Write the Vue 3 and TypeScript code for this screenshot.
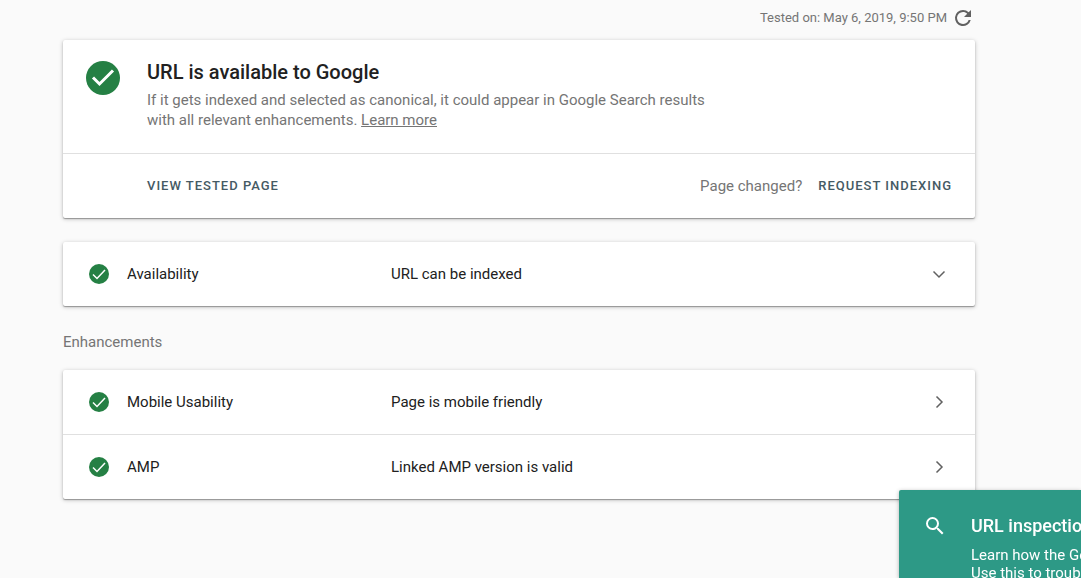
<script setup lang="ts">
import { ref } from 'vue'

interface Check {
  name: string
  status: string
}

const availability: Check = { name: 'Availability', status: 'URL can be indexed' }
const enhancements: Check[] = [
  { name: 'Mobile Usability', status: 'Page is mobile friendly' },
  { name: 'AMP', status: 'Linked AMP version is valid' },
]
const testedOn = ref('May 6, 2019, 9:50 PM')
</script>

<template>
  <div class="page">
    <main class="content">
      <div class="tested">
        <span>Tested on: {{ testedOn }}</span>
        <button class="refresh" type="button" aria-label="Test again">
          <svg viewBox="0 0 24 24" width="24" height="24" aria-hidden="true">
            <path d="M17.65 6.35A7.95 7.95 0 0 0 12 4a8 8 0 1 0 7.73 10h-2.08A6 6 0 1 1 12 6c1.66 0 3.14.69 4.22 1.78L13 11h7V4z" />
          </svg>
        </button>
      </div>

      <section class="card">
        <div class="verdict">
          <svg class="verdict-icon" viewBox="0 0 34 34" width="34" height="34" aria-hidden="true">
            <circle cx="17" cy="17" r="17" />
            <path d="M7 16.500l6.500 6.500L27 9.500" stroke-width="3" />
          </svg>
          <div class="verdict-text">
            <h1>URL is available to Google</h1>
            <p>
              If it gets indexed and selected as canonical, it could appear in Google Search results with all relevant
              enhancements. <a href="#">Learn more</a>
            </p>
          </div>
        </div>
        <div class="actions">
          <button class="action" type="button">VIEW TESTED PAGE</button>
          <span class="changed">Page changed?</span>
          <button class="action" type="button">REQUEST INDEXING</button>
        </div>
      </section>

      <section class="card">
        <button class="row" type="button">
          <svg class="status-icon" viewBox="0 0 20 20" width="20" height="20" aria-hidden="true">
            <circle cx="10" cy="10" r="10" />
            <path d="M4 10.500l4 4L16 6" stroke-width="1.500" />
          </svg>
          <span class="name">{{ availability.name }}</span>
          <span class="status">{{ availability.status }}</span>
          <svg class="chevron" viewBox="0 0 24 24" width="24" height="24" aria-hidden="true">
            <path d="M6.500 9.500l5.500 5.500L17.500 9.500" />
          </svg>
        </button>
      </section>

      <h2>Enhancements</h2>

      <section class="card">
        <button v-for="check in enhancements" :key="check.name" class="row" type="button">
          <svg class="status-icon" viewBox="0 0 20 20" width="20" height="20" aria-hidden="true">
            <circle cx="10" cy="10" r="10" />
            <path d="M4 10.500l4 4L16 6" stroke-width="1.500" />
          </svg>
          <span class="name">{{ check.name }}</span>
          <span class="status">{{ check.status }}</span>
          <svg class="chevron" viewBox="0 0 24 24" width="24" height="24" aria-hidden="true">
            <path d="M9.500 6.500l5.500 5.500L9.500 17.500" />
          </svg>
        </button>
      </section>
    </main>

    <aside class="tip">
      <svg class="search" viewBox="0 0 24 24" width="24" height="24" aria-hidden="true">
        <path d="M15.500 14h-.79l-.28-.27A6.470 6.470 0 0 0 16 9.500 6.500 6.500 0 1 0 9.500 16c1.610 0 3.090-.59 4.230-1.570l.27.28v.79l5 4.990L20.490 19zm-6 0a4.500 4.500 0 1 1 0-9 4.500 4.500 0 0 1 0 9z" />
      </svg>
      <div>
        <h3>URL inspection</h3>
        <p>Learn how the Google<br />Use this to troubleshoot</p>
      </div>
    </aside>
  </div>
</template>

<style>
body {
  margin: 0;
  background: #fafafa;
}
</style>

<style scoped>
.page {
  min-height: 100vh;
  box-sizing: border-box;
  padding: 0 106px 24px 63px;
  font-family: Roboto, "Liberation Sans", sans-serif;
  font-size: 15px;
  line-height: 20px;
  color: #212121;
}
button {
  margin: 0;
  padding: 0;
  border: 0;
  background: none;
  font: inherit;
  color: inherit;
  cursor: pointer;
}
h1,
h2,
h3,
p {
  margin: 0;
}
.tested {
  display: flex;
  align-items: center;
  justify-content: flex-end;
  gap: 4px;
  height: 36px;
  margin-bottom: 4px;
  font-size: 13px;
  color: #757575;
}
.refresh {
  display: flex;
}
.refresh svg {
  fill: #616161;
}
.card {
  margin-bottom: 24px;
  border-radius: 2px;
  background: #fff;
  box-shadow: 0 1px 1px rgba(0, 0, 0, 0.3), 0 1px 4px rgba(0, 0, 0, 0.25);
}
.verdict {
  display: flex;
  gap: 27px;
  padding: 20px 23px 23px;
}
.verdict-icon {
  flex: none;
  margin-top: 1px;
}
.verdict-icon circle,
.status-icon circle {
  fill: #258044;
}
.verdict-icon path,
.status-icon path {
  fill: none;
  stroke: #fff;
}
.verdict-text {
  max-width: 570px;
}
h1 {
  margin-bottom: 6px;
  font-size: 20px;
  font-weight: 500;
  line-height: 24px;
}
.verdict-text p {
  color: #757575;
}
.verdict-text a {
  color: inherit;
}
.actions {
  display: flex;
  align-items: center;
  height: 64px;
  padding: 0 23px 0 84px;
  border-top: 1px solid #e0e0e0;
}
.action {
  font-size: 13px;
  font-weight: 500;
  letter-spacing: 1px;
  color: #455a64;
}
.changed {
  margin: 0 16px 0 auto;
  color: #757575;
}
.row {
  display: flex;
  align-items: center;
  width: 100%;
  height: 64px;
  padding: 0 24px 0 26px;
  text-align: left;
}
.row + .row {
  height: 65px;
  border-top: 1px solid #e0e0e0;
}
.status-icon {
  flex: none;
  margin-right: 18px;
}
.name {
  flex: none;
  width: 264px;
}
.status {
  flex: 1;
}
.chevron {
  flex: none;
  fill: none;
  stroke: #616161;
  stroke-width: 1.500;
}
h2 {
  margin-bottom: 18px;
  padding-top: 2px;
  font-size: 15px;
  font-weight: 400;
  color: #757575;
}
.tip {
  position: fixed;
  right: 0;
  bottom: 0;
  display: flex;
  gap: 24px;
  box-sizing: border-box;
  width: 182px;
  height: 88px;
  padding: 24px 0 0 24px;
  overflow: hidden;
  border-top-left-radius: 2px;
  background: #2d9986;
  color: #fff;
  white-space: nowrap;
  box-shadow: 0 1px 4px rgba(0, 0, 0, 0.3);
}
.search {
  flex: none;
  fill: #fff;
}
h3 {
  margin-bottom: 8px;
  font-size: 18px;
  font-weight: 500;
  line-height: 24px;
}
.tip p {
  line-height: 18px;
}
</style>
